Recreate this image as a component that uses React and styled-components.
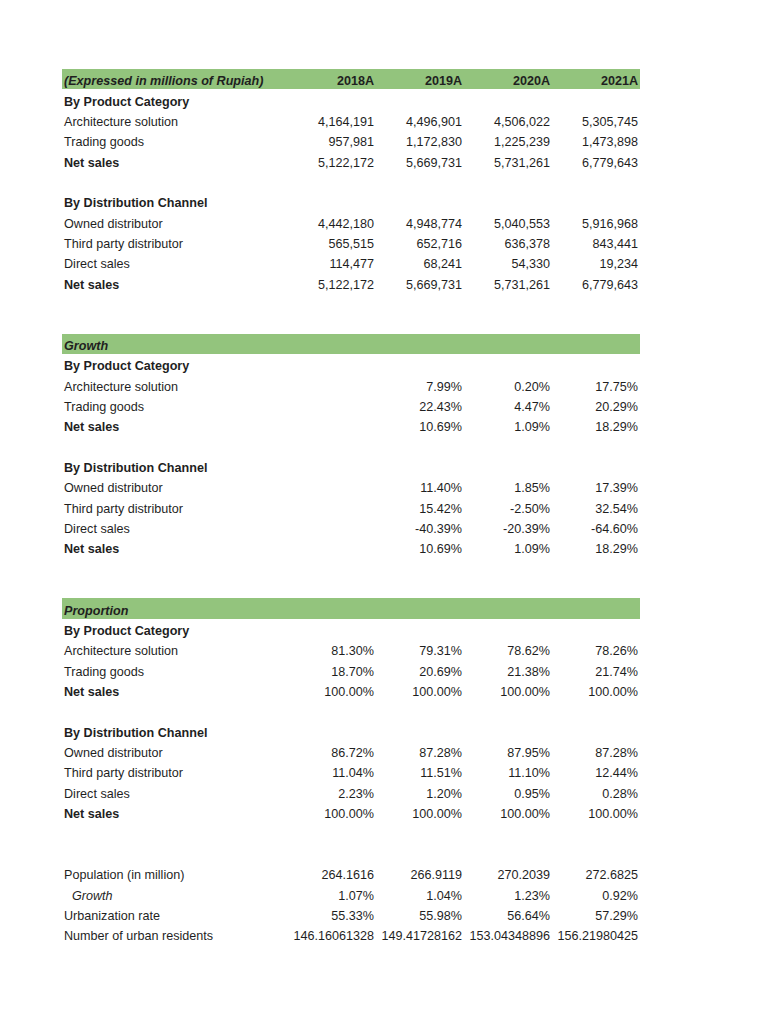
import styled, { createGlobalStyle } from 'styled-components';

const GlobalStyle = createGlobalStyle`
  body {
    margin: 0;
    background: #ffffff;
    font-family: 'Liberation Sans', Arial, sans-serif;
  }
`

const rows = [
  { kind: 'band', label: '(Expressed in millions of Rupiah)', values: ['2018A', '2019A', '2020A', '2021A'] },
  { kind: 'head', label: 'By Product Category' },
  { label: 'Architecture solution', values: ['4,164,191', '4,496,901', '4,506,022', '5,305,745'] },
  { label: 'Trading goods', values: ['957,981', '1,172,830', '1,225,239', '1,473,898'] },
  { kind: 'total', label: 'Net sales', values: ['5,122,172', '5,669,731', '5,731,261', '6,779,643'] },
  { kind: 'blank' },
  { kind: 'head', label: 'By Distribution Channel' },
  { label: 'Owned distributor', values: ['4,442,180', '4,948,774', '5,040,553', '5,916,968'] },
  { label: 'Third party distributor', values: ['565,515', '652,716', '636,378', '843,441'] },
  { label: 'Direct sales', values: ['114,477', '68,241', '54,330', '19,234'] },
  { kind: 'total', label: 'Net sales', values: ['5,122,172', '5,669,731', '5,731,261', '6,779,643'] },
  { kind: 'blank' },
  { kind: 'blank' },
  { kind: 'band', label: 'Growth', values: [] },
  { kind: 'head', label: 'By Product Category' },
  { label: 'Architecture solution', values: ['', '7.99%', '0.20%', '17.75%'] },
  { label: 'Trading goods', values: ['', '22.43%', '4.47%', '20.29%'] },
  { kind: 'total', label: 'Net sales', values: ['', '10.69%', '1.09%', '18.29%'] },
  { kind: 'blank' },
  { kind: 'head', label: 'By Distribution Channel' },
  { label: 'Owned distributor', values: ['', '11.40%', '1.85%', '17.39%'] },
  { label: 'Third party distributor', values: ['', '15.42%', '-2.50%', '32.54%'] },
  { label: 'Direct sales', values: ['', '-40.39%', '-20.39%', '-64.60%'] },
  { kind: 'total', label: 'Net sales', values: ['', '10.69%', '1.09%', '18.29%'] },
  { kind: 'blank' },
  { kind: 'blank' },
  { kind: 'band', label: 'Proportion', values: [] },
  { kind: 'head', label: 'By Product Category' },
  { label: 'Architecture solution', values: ['81.30%', '79.31%', '78.62%', '78.26%'] },
  { label: 'Trading goods', values: ['18.70%', '20.69%', '21.38%', '21.74%'] },
  { kind: 'total', label: 'Net sales', values: ['100.00%', '100.00%', '100.00%', '100.00%'] },
  { kind: 'blank' },
  { kind: 'head', label: 'By Distribution Channel' },
  { label: 'Owned distributor', values: ['86.72%', '87.28%', '87.95%', '87.28%'] },
  { label: 'Third party distributor', values: ['11.04%', '11.51%', '11.10%', '12.44%'] },
  { label: 'Direct sales', values: ['2.23%', '1.20%', '0.95%', '0.28%'] },
  { kind: 'total', label: 'Net sales', values: ['100.00%', '100.00%', '100.00%', '100.00%'] },
  { kind: 'blank' },
  { kind: 'blank' },
  { label: 'Population (in million)', values: ['264.1616', '266.9119', '270.2039', '272.6825'] },
  { kind: 'sub', label: 'Growth', values: ['1.07%', '1.04%', '1.23%', '0.92%'] },
  { label: 'Urbanization rate', values: ['55.33%', '55.98%', '56.64%', '57.29%'] },
  { label: 'Number of urban residents', values: ['146.16061328', '149.41728162', '153.04348896', '156.21980425'] },
]

function App() {
  return (
    <>
      <GlobalStyle />
      <Page>
        <Sheet>
          {rows.map((row, i) => (
            <Row key={i} $band={row.kind === 'band'}>
              <Label $kind={row.kind}>{row.label}</Label>
              {[0, 1, 2, 3].map((c) => (
                <Value key={c} $bold={row.kind === 'band'}>
                  {row.values ? row.values[c] : ''}
                </Value>
              ))}
            </Row>
          ))}
        </Sheet>
      </Page>
    </>
  );
}

export default App;

const Page = styled.div`
  padding: 69px 0 40px 62px;
`
const Sheet = styled.div`
  display: flex;
  flex-direction: column;
  width: 578px;
  color: #1f1f1f;
  font-size: 12.6px;
`
const Row = styled.div`
  display: grid;
  grid-template-columns: 226px repeat(4, 88px);
  box-sizing: border-box;
  height: 20.36px;
  padding-top: 4px;
  align-items: center;
  background: ${(props) => (props.$band ? '#93c47d' : 'transparent')};
`
const Label = styled.div`
  padding-left: ${(props) => (props.$kind === 'sub' ? '10px' : '2px')};
  white-space: nowrap;
  font-weight: ${(props) => (['band', 'head', 'total'].includes(props.$kind) ? 700 : 400)};
  font-style: ${(props) => (props.$kind === 'band' || props.$kind === 'sub' ? 'italic' : 'normal')};
`
const Value = styled.div`
  text-align: right;
  padding-right: 2px;
  white-space: nowrap;
  font-weight: ${(props) => (props.$bold ? 700 : 400)};
`
